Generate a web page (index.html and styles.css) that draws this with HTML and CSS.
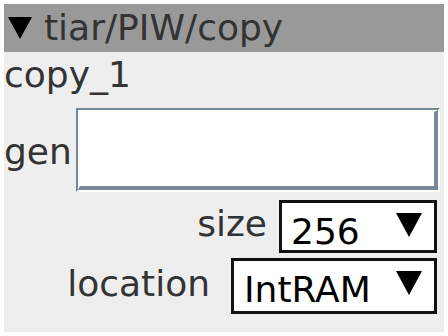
FILE: index.html
```html
<!DOCTYPE html>
<html>
<head>
<meta charset="utf-8">
<link rel="stylesheet" href="styles.css">
</head>
<body>
<div class="panel">
  <div class="header">
    <svg class="tri-head" width="24" height="22" viewBox="0 0 24 22"><polygon points="0,0 24,0 12,22" fill="#000"/></svg>
    <span>tiar/PIW/copy</span>
  </div>
  <div class="name">copy_1</div>
  <div class="gen-row">
    <span class="gen-label">gen</span>
    <div class="entry"><div class="entry-inner"></div></div>
  </div>
  <div class="sel-row size-row">
    <span class="sel-label size-label">size</span>
    <div class="select size-select">
      <span class="sel-text">256</span>
      <svg class="tri-sel" width="26" height="24" viewBox="0 0 26 24"><polygon points="0,0 26,0 13,24" fill="#000"/></svg>
    </div>
  </div>
  <div class="sel-row loc-row">
    <span class="sel-label loc-label">location</span>
    <div class="select loc-select">
      <span class="sel-text">IntRAM</span>
      <svg class="tri-sel" width="26" height="24" viewBox="0 0 26 24"><polygon points="0,0 26,0 13,24" fill="#000"/></svg>
    </div>
  </div>
</div>
</body>
</html>
```

FILE: styles.css
```css
html, body {
  margin: 0;
  background: #fff;
}
body {
  padding: 4px;
  font-family: "DejaVu Sans", sans-serif;
  font-size: 36px;
  color: #333;
}
.panel {
  width: 440px;
  height: 328px;
  background: #eee;
  display: flex;
  flex-direction: column;
}
.header {
  height: 48px;
  line-height: 48px;
  background: #999;
  display: flex;
  align-items: center;
  gap: 12px;
  padding-left: 4px;
  color: #333;
}
.tri-head {
  display: block;
  flex: none;
}
.name {
  height: 56px;
  box-sizing: border-box;
  padding-top: 2px;
  line-height: 42px;
}
.gen-row {
  height: 84px;
  display: flex;
  align-items: center;
  gap: 4px;
}
.gen-label {
  line-height: 42px;
  padding-top: 3px;
}
.entry {
  width: 364px;
  height: 84px;
  box-sizing: border-box;
  border: 2px solid;
  border-color: #778899 #fff #fff #778899;
}
.entry-inner {
  height: 100%;
  box-sizing: border-box;
  background: #fff;
  border-style: solid;
  border-width: 2px 4px 4px 2px;
  border-color: #fff #778899 #778899 #fff;
}
.sel-row {
  display: flex;
  justify-content: flex-end;
  align-items: flex-start;
  padding-right: 7px;
}
.size-row {
  margin-top: 8px;
  height: 53px;
}
.loc-row {
  margin-top: 5px;
  height: 56px;
}
.sel-label {
  line-height: 42px;
}
.size-label {
  margin-top: 3px;
  margin-right: 12px;
}
.loc-label {
  margin-top: 5px;
  margin-right: 21px;
}
.select {
  box-sizing: border-box;
  height: 100%;
  border: 3px solid #111;
  background: #fff;
  color: #000;
  display: flex;
  align-items: flex-start;
  justify-content: space-between;
  padding: 0 12px 0 9px;
}
.size-select {
  width: 158px;
}
.loc-select {
  width: 206px;
  padding-left: 10px;
}
.sel-text {
  line-height: 42px;
  padding-top: 8px;
}
.tri-sel {
  display: block;
  flex: none;
  margin-top: 10px;
}
```
